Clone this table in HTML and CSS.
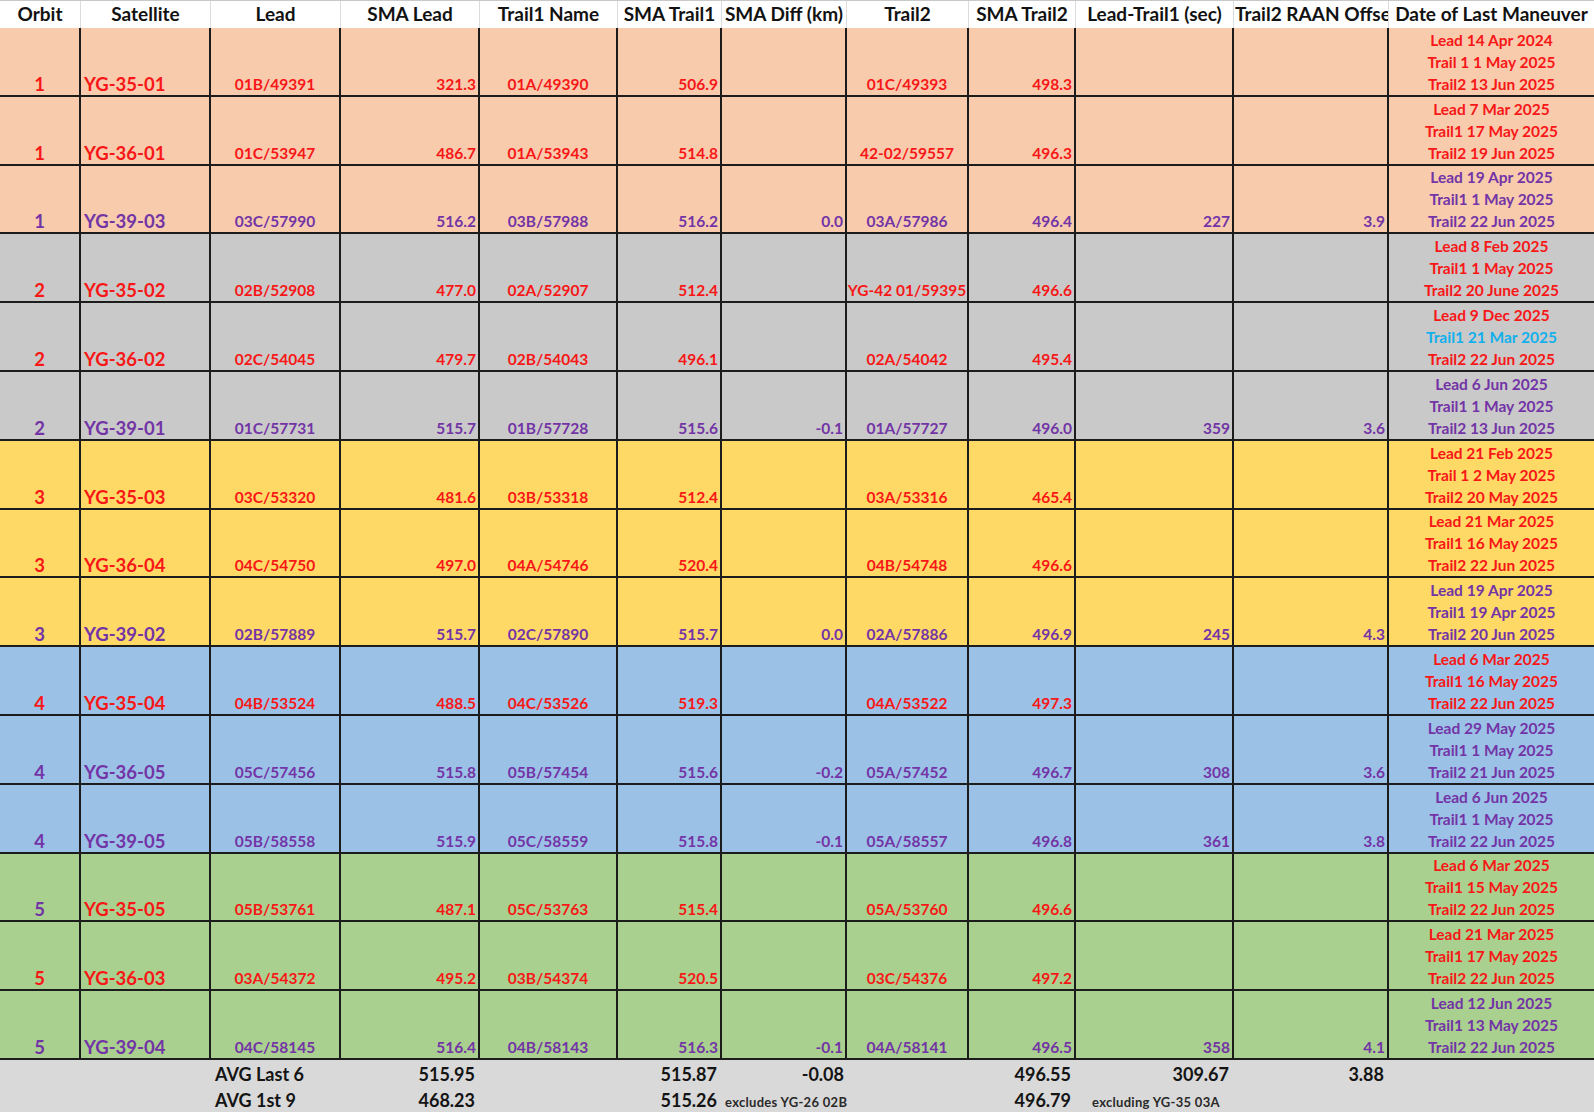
FILE: index.html
```html
<!DOCTYPE html>
<html lang="en">
<head>
<meta charset="utf-8">
<title>YG Orbit SMA Table</title>
<link rel="stylesheet" href="styles.css">
</head>
<body>
<div class="sheet">
  <div class="row head">
    <div class="h">Orbit</div>
    <div class="h">Satellite</div>
    <div class="h">Lead</div>
    <div class="h">SMA Lead</div>
    <div class="h">Trail1 Name</div>
    <div class="h">SMA Trail1</div>
    <div class="h">SMA Diff (km)</div>
    <div class="h">Trail2</div>
    <div class="h">SMA Trail2</div>
    <div class="h">Lead-Trail1 (sec)</div>
    <div class="h clip">Trail2 RAAN Offset</div>
    <div class="h">Date of Last Maneuver</div>
  </div>

  <div class="row data peach red">
    <div class="c orbit">1</div><div class="c sat">YG-35-01</div><div class="c name">01B/49391</div><div class="c num">321.3</div><div class="c name">01A/49390</div><div class="c num">506.9</div><div class="c num"></div><div class="c name">01C/49393</div><div class="c num">498.3</div><div class="c num"></div><div class="c num"></div>
    <div class="c dates"><span>Lead 14 Apr 2024</span><span>Trail 1 1 May 2025</span><span>Trail2 13 Jun 2025</span></div>
  </div>
  <div class="row data peach red">
    <div class="c orbit">1</div><div class="c sat">YG-36-01</div><div class="c name">01C/53947</div><div class="c num">486.7</div><div class="c name">01A/53943</div><div class="c num">514.8</div><div class="c num"></div><div class="c name">42-02/59557</div><div class="c num">496.3</div><div class="c num"></div><div class="c num"></div>
    <div class="c dates"><span>Lead 7 Mar 2025</span><span>Trail1 17 May 2025</span><span>Trail2 19 Jun 2025</span></div>
  </div>
  <div class="row data peach purple">
    <div class="c orbit">1</div><div class="c sat">YG-39-03</div><div class="c name">03C/57990</div><div class="c num">516.2</div><div class="c name">03B/57988</div><div class="c num">516.2</div><div class="c num">0.0</div><div class="c name">03A/57986</div><div class="c num">496.4</div><div class="c num">227</div><div class="c num">3.9</div>
    <div class="c dates"><span>Lead 19 Apr 2025</span><span>Trail1 1 May 2025</span><span>Trail2 22 Jun 2025</span></div>
  </div>

  <div class="row data gray red">
    <div class="c orbit">2</div><div class="c sat">YG-35-02</div><div class="c name">02B/52908</div><div class="c num">477.0</div><div class="c name">02A/52907</div><div class="c num">512.4</div><div class="c num"></div><div class="c name">YG-42 01/59395</div><div class="c num">496.6</div><div class="c num"></div><div class="c num"></div>
    <div class="c dates"><span>Lead 8 Feb 2025</span><span>Trail1 1 May 2025</span><span>Trail2 20 June 2025</span></div>
  </div>
  <div class="row data gray red">
    <div class="c orbit">2</div><div class="c sat">YG-36-02</div><div class="c name">02C/54045</div><div class="c num">479.7</div><div class="c name">02B/54043</div><div class="c num">496.1</div><div class="c num"></div><div class="c name">02A/54042</div><div class="c num">495.4</div><div class="c num"></div><div class="c num"></div>
    <div class="c dates"><span>Lead 9 Dec 2025</span><span class="cyan">Trail1 21 Mar 2025</span><span>Trail2 22 Jun 2025</span></div>
  </div>
  <div class="row data gray purple">
    <div class="c orbit">2</div><div class="c sat">YG-39-01</div><div class="c name">01C/57731</div><div class="c num">515.7</div><div class="c name">01B/57728</div><div class="c num">515.6</div><div class="c num">-0.1</div><div class="c name">01A/57727</div><div class="c num">496.0</div><div class="c num">359</div><div class="c num">3.6</div>
    <div class="c dates"><span>Lead 6 Jun 2025</span><span>Trail1 1 May 2025</span><span>Trail2 13 Jun 2025</span></div>
  </div>

  <div class="row data yellow red">
    <div class="c orbit">3</div><div class="c sat">YG-35-03</div><div class="c name">03C/53320</div><div class="c num">481.6</div><div class="c name">03B/53318</div><div class="c num">512.4</div><div class="c num"></div><div class="c name">03A/53316</div><div class="c num">465.4</div><div class="c num"></div><div class="c num"></div>
    <div class="c dates"><span>Lead 21 Feb 2025</span><span>Trail 1 2 May 2025</span><span>Trail2 20 May 2025</span></div>
  </div>
  <div class="row data yellow red">
    <div class="c orbit">3</div><div class="c sat">YG-36-04</div><div class="c name">04C/54750</div><div class="c num">497.0</div><div class="c name">04A/54746</div><div class="c num">520.4</div><div class="c num"></div><div class="c name">04B/54748</div><div class="c num">496.6</div><div class="c num"></div><div class="c num"></div>
    <div class="c dates"><span>Lead 21 Mar 2025</span><span>Trail1 16 May 2025</span><span>Trail2 22 Jun 2025</span></div>
  </div>
  <div class="row data yellow purple">
    <div class="c orbit">3</div><div class="c sat">YG-39-02</div><div class="c name">02B/57889</div><div class="c num">515.7</div><div class="c name">02C/57890</div><div class="c num">515.7</div><div class="c num">0.0</div><div class="c name">02A/57886</div><div class="c num">496.9</div><div class="c num">245</div><div class="c num">4.3</div>
    <div class="c dates"><span>Lead 19 Apr 2025</span><span>Trail1 19 Apr 2025</span><span>Trail2 20 Jun 2025</span></div>
  </div>

  <div class="row data blue red">
    <div class="c orbit">4</div><div class="c sat">YG-35-04</div><div class="c name">04B/53524</div><div class="c num">488.5</div><div class="c name">04C/53526</div><div class="c num">519.3</div><div class="c num"></div><div class="c name">04A/53522</div><div class="c num">497.3</div><div class="c num"></div><div class="c num"></div>
    <div class="c dates"><span>Lead 6 Mar 2025</span><span>Trail1 16 May 2025</span><span>Trail2 22 Jun 2025</span></div>
  </div>
  <div class="row data blue purple">
    <div class="c orbit">4</div><div class="c sat">YG-36-05</div><div class="c name">05C/57456</div><div class="c num">515.8</div><div class="c name">05B/57454</div><div class="c num">515.6</div><div class="c num">-0.2</div><div class="c name">05A/57452</div><div class="c num">496.7</div><div class="c num">308</div><div class="c num">3.6</div>
    <div class="c dates"><span>Lead 29 May 2025</span><span>Trail1 1 May 2025</span><span>Trail2 21 Jun 2025</span></div>
  </div>
  <div class="row data blue purple">
    <div class="c orbit">4</div><div class="c sat">YG-39-05</div><div class="c name">05B/58558</div><div class="c num">515.9</div><div class="c name">05C/58559</div><div class="c num">515.8</div><div class="c num">-0.1</div><div class="c name">05A/58557</div><div class="c num">496.8</div><div class="c num">361</div><div class="c num">3.8</div>
    <div class="c dates"><span>Lead 6 Jun 2025</span><span>Trail1 1 May 2025</span><span>Trail2 22 Jun 2025</span></div>
  </div>

  <div class="row data green red">
    <div class="c orbit purple-txt">5</div><div class="c sat">YG-35-05</div><div class="c name">05B/53761</div><div class="c num">487.1</div><div class="c name">05C/53763</div><div class="c num">515.4</div><div class="c num"></div><div class="c name">05A/53760</div><div class="c num">496.6</div><div class="c num"></div><div class="c num"></div>
    <div class="c dates"><span>Lead 6 Mar 2025</span><span>Trail1 15 May 2025</span><span>Trail2 22 Jun 2025</span></div>
  </div>
  <div class="row data green red">
    <div class="c orbit">5</div><div class="c sat">YG-36-03</div><div class="c name">03A/54372</div><div class="c num">495.2</div><div class="c name">03B/54374</div><div class="c num">520.5</div><div class="c num"></div><div class="c name">03C/54376</div><div class="c num">497.2</div><div class="c num"></div><div class="c num"></div>
    <div class="c dates"><span>Lead 21 Mar 2025</span><span>Trail1 17 May 2025</span><span>Trail2 22 Jun 2025</span></div>
  </div>
  <div class="row data green purple">
    <div class="c orbit">5</div><div class="c sat">YG-39-04</div><div class="c name">04C/58145</div><div class="c num">516.4</div><div class="c name">04B/58143</div><div class="c num">516.3</div><div class="c num">-0.1</div><div class="c name">04A/58141</div><div class="c num">496.5</div><div class="c num">358</div><div class="c num">4.1</div>
    <div class="c dates"><span>Lead 12 Jun 2025</span><span>Trail1 13 May 2025</span><span>Trail2 22 Jun 2025</span></div>
  </div>

  <div class="row foot">
    <div class="f"></div><div class="f"></div><div class="f lbl">AVG Last 6</div><div class="f fnum">515.95</div><div class="f"></div><div class="f fnum">515.87</div><div class="f fnum tight">-0.08</div><div class="f"></div><div class="f fnum">496.55</div><div class="f fnum">309.67</div><div class="f fnum">3.88</div><div class="f"></div>
  </div>
  <div class="row foot">
    <div class="f"></div><div class="f"></div><div class="f lbl">AVG 1st 9</div><div class="f fnum">468.23</div><div class="f"></div><div class="f fnum">515.26</div><div class="f note">excludes YG-26 02B</div><div class="f"></div><div class="f fnum">496.79</div><div class="f note indent">excluding YG-35 03A</div><div class="f"></div><div class="f"></div>
  </div>
</div>
</body>
</html>
```

FILE: styles.css
```css
* {
  box-sizing: border-box;
}

html,
body {
  margin: 0;
  padding: 0;
  background: #ffffff;
}

body {
  width: 1594px;
  height: 1112px;
  overflow: hidden;
  font-family: Lato, "Liberation Sans", sans-serif;
  font-weight: 700;
  --cols: 81px 130px 130px 139px 138px 104px 125px 122px 107px 158px 155px 205px;
  --line: #1c1c1c;
}

.sheet {
  display: flex;
  flex-direction: column;
}

.row {
  display: grid;
  grid-template-columns: var(--cols);
}

/* header */
.head {
  height: 28px;
  background: #ffffff;
  border-top: 1px solid #c9c9c9;
}

.h {
  font-size: 19px;
  line-height: 25px;
  color: #121212;
  text-align: center;
  white-space: nowrap;
  overflow: hidden;
  border-right: 1px solid #dcdcdc;
}

.h.clip {
  text-align: left;
  padding-left: 1px;
}

.h:last-child {
  border-right: none;
}

/* data rows */
.data {
  height: 68.8px;
}

.peach { background: #f8cbad; }
.gray { background: #c9c9c9; }
.yellow { background: #ffd966; }
.blue { background: #9bc2e6; }
.green { background: #a9d08e; }

.red { color: #f71717; }
.purple { color: #7334a6; }
.purple-txt { color: #7334a6; }
.cyan { color: #12b0ec; }

.c {
  display: flex;
  align-items: flex-end;
  font-size: 15.5px;
  line-height: 22px;
  white-space: nowrap;
  border-right: 2px solid var(--line);
  border-bottom: 2px solid var(--line);
}

.orbit {
  justify-content: center;
  font-size: 18.5px;
}

.sat {
  justify-content: flex-start;
  padding-left: 3px;
  font-size: 18.5px;
}

.name {
  justify-content: center;
}

.num {
  justify-content: flex-end;
  padding-right: 2px;
}

.dates {
  flex-direction: column;
  justify-content: flex-end;
  align-items: center;
  border-right: none;
}

.dates span {
  display: block;
  line-height: 22px;
}

/* footer */
.foot {
  height: 26px;
  background: #d9d9d9;
}

.f {
  display: flex;
  align-items: flex-end;
  font-size: 18px;
  line-height: 22px;
  padding-bottom: 1px;
  color: #141414;
  white-space: nowrap;
}

.lbl {
  padding-left: 4px;
}

.fnum {
  justify-content: flex-end;
  padding-right: 5px;
}

.fnum.tight {
  padding-right: 3px;
}

.note {
  font-size: 13px;
  line-height: 18px;
  letter-spacing: 0.3px;
  color: #2a2a2a;
  padding-left: 3px;
}

.note.indent {
  padding-left: 16px;
}
```
